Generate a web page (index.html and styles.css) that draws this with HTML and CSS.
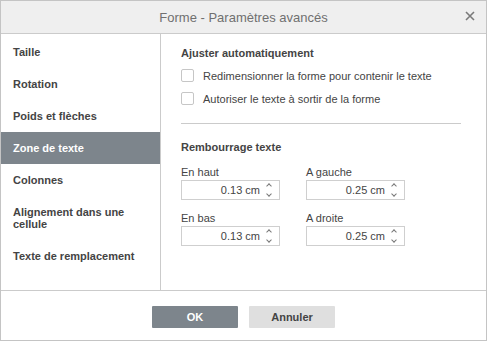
FILE: index.html
```html
<!DOCTYPE html>
<html lang="fr">
<head>
  <meta charset="UTF-8" />
  <title>Forme - Paramètres avancés</title>
  <link rel="stylesheet" href="styles.css">
</head>
<body>

  <div class="dialog">
    <div class="header">
      <span class="title">Forme - Paramètres avancés</span>
      <svg class="close" width="10" height="10" viewBox="0 0 10 10">
        <path d="M1 1 L9 9 M9 1 L1 9" stroke="#7a7a7a" stroke-width="1.6" fill="none"/>
      </svg>
    </div>

    <div class="body">
      <div class="sidebar">
        <div class="tab">Taille</div>
        <div class="tab">Rotation</div>
        <div class="tab">Poids et flèches</div>
        <div class="tab active">Zone de texte</div>
        <div class="tab">Colonnes</div>
        <div class="tab tall">Alignement dans une<br>cellule</div>
        <div class="tab">Texte de remplacement</div>
      </div>

      <div class="content">
        <div class="section-title">Ajuster automatiquement</div>
        <div class="checks">
          <label class="check"><span class="box"></span>Redimensionner la forme pour contenir le texte</label>
          <label class="check"><span class="box"></span>Autoriser le texte à sortir de la forme</label>
        </div>

        <div class="separator"></div>

        <div class="section-title">Rembourrage texte</div>
        <div class="grid">
          <div class="field">
            <div class="field-label">En haut</div>
            <div class="spin"><span class="value">0.13 cm</span><span class="arrows"></span></div>
          </div>
          <div class="field">
            <div class="field-label">A gauche</div>
            <div class="spin"><span class="value">0.25 cm</span><span class="arrows"></span></div>
          </div>
          <div class="field">
            <div class="field-label">En bas</div>
            <div class="spin"><span class="value">0.13 cm</span><span class="arrows"></span></div>
          </div>
          <div class="field">
            <div class="field-label">A droite</div>
            <div class="spin"><span class="value">0.25 cm</span><span class="arrows"></span></div>
          </div>
        </div>
      </div>
    </div>

    <div class="footer">
      <button class="btn primary">OK</button>
      <button class="btn">Annuler</button>
    </div>
  </div>

</body>
</html>
```

FILE: styles.css
```css
body {
  margin: 0;
  font-family: "Liberation Sans", Arial, sans-serif;
  font-size: 11px;
  color: #444;
  background: #fff;
}

.dialog {
  width: 487px;
  height: 341px;
  box-sizing: border-box;
  border: 1px solid #c4c4c4;
  display: flex;
  flex-direction: column;
}

.header {
  height: 32px;
  background: #efefef;
  border-bottom: 1px solid #cbcbcb;
  position: relative;
  display: flex;
  align-items: center;
  justify-content: center;
}

.title {
  font-size: 13px;
  color: #707070;
}

.close {
  position: absolute;
  right: 11px;
  top: 10px;
}

.body {
  height: 256px;
  display: flex;
}

.sidebar {
  width: 159px;
  border-right: 1px solid #cbcbcb;
  padding-top: 2px;
}

.tab {
  height: 32px;
  padding-left: 12px;
  display: flex;
  align-items: center;
  font-weight: bold;
  color: #444;
}

.tab.tall {
  height: 44px;
  line-height: 12px;
}

.tab.active {
  background: #7d858c;
  color: #fff;
}

.content {
  flex: 1;
  padding: 12px 0 0 20px;
}

.section-title {
  font-weight: bold;
  line-height: 14px;
}

.checks {
  margin-top: 4px;
}

.check {
  display: flex;
  align-items: center;
  height: 23px;
  gap: 9px;
}

.box {
  width: 11px;
  height: 11px;
  border: 1px solid #c6c6c6;
  border-radius: 2px;
  background: #fff;
}

.separator {
  width: 280px;
  border-top: 1px solid #cbcbcb;
  margin: 13px 0 16px;
}

.grid {
  display: grid;
  grid-template-columns: 99px 99px;
  column-gap: 26px;
  row-gap: 12px;
  margin-top: 12px;
}

.field-label {
  line-height: 12px;
  margin-bottom: 2px;
}

.spin {
  height: 18px;
  border: 1px solid #cfcfcf;
  display: flex;
  align-items: center;
  justify-content: flex-end;
  position: relative;
  padding-right: 19px;
  color: #444;
}

.arrows {
  position: absolute;
  right: 6px;
  top: 2px;
  width: 7px;
  height: 14px;
}

.arrows::before,
.arrows::after {
  content: "";
  position: absolute;
  left: 1px;
  width: 3px;
  height: 3px;
  border-left: 1px solid #777;
  border-top: 1px solid #777;
}

.arrows::before {
  top: 1px;
  transform: rotate(45deg);
}

.arrows::after {
  top: 9px;
  transform: rotate(-135deg);
}

.footer {
  flex: 1;
  border-top: 1px solid #cbcbcb;
  display: flex;
  justify-content: center;
  align-items: flex-start;
  padding-top: 15px;
  gap: 11px;
}

.btn {
  width: 86px;
  height: 22px;
  border: none;
  border-radius: 1px;
  background: #dfdfdf;
  color: #444;
  font-family: "Liberation Sans", Arial, sans-serif;
  font-size: 11px;
  font-weight: bold;
  padding: 0;
}

.btn.primary {
  background: #7d858c;
  color: #fff;
}
```
